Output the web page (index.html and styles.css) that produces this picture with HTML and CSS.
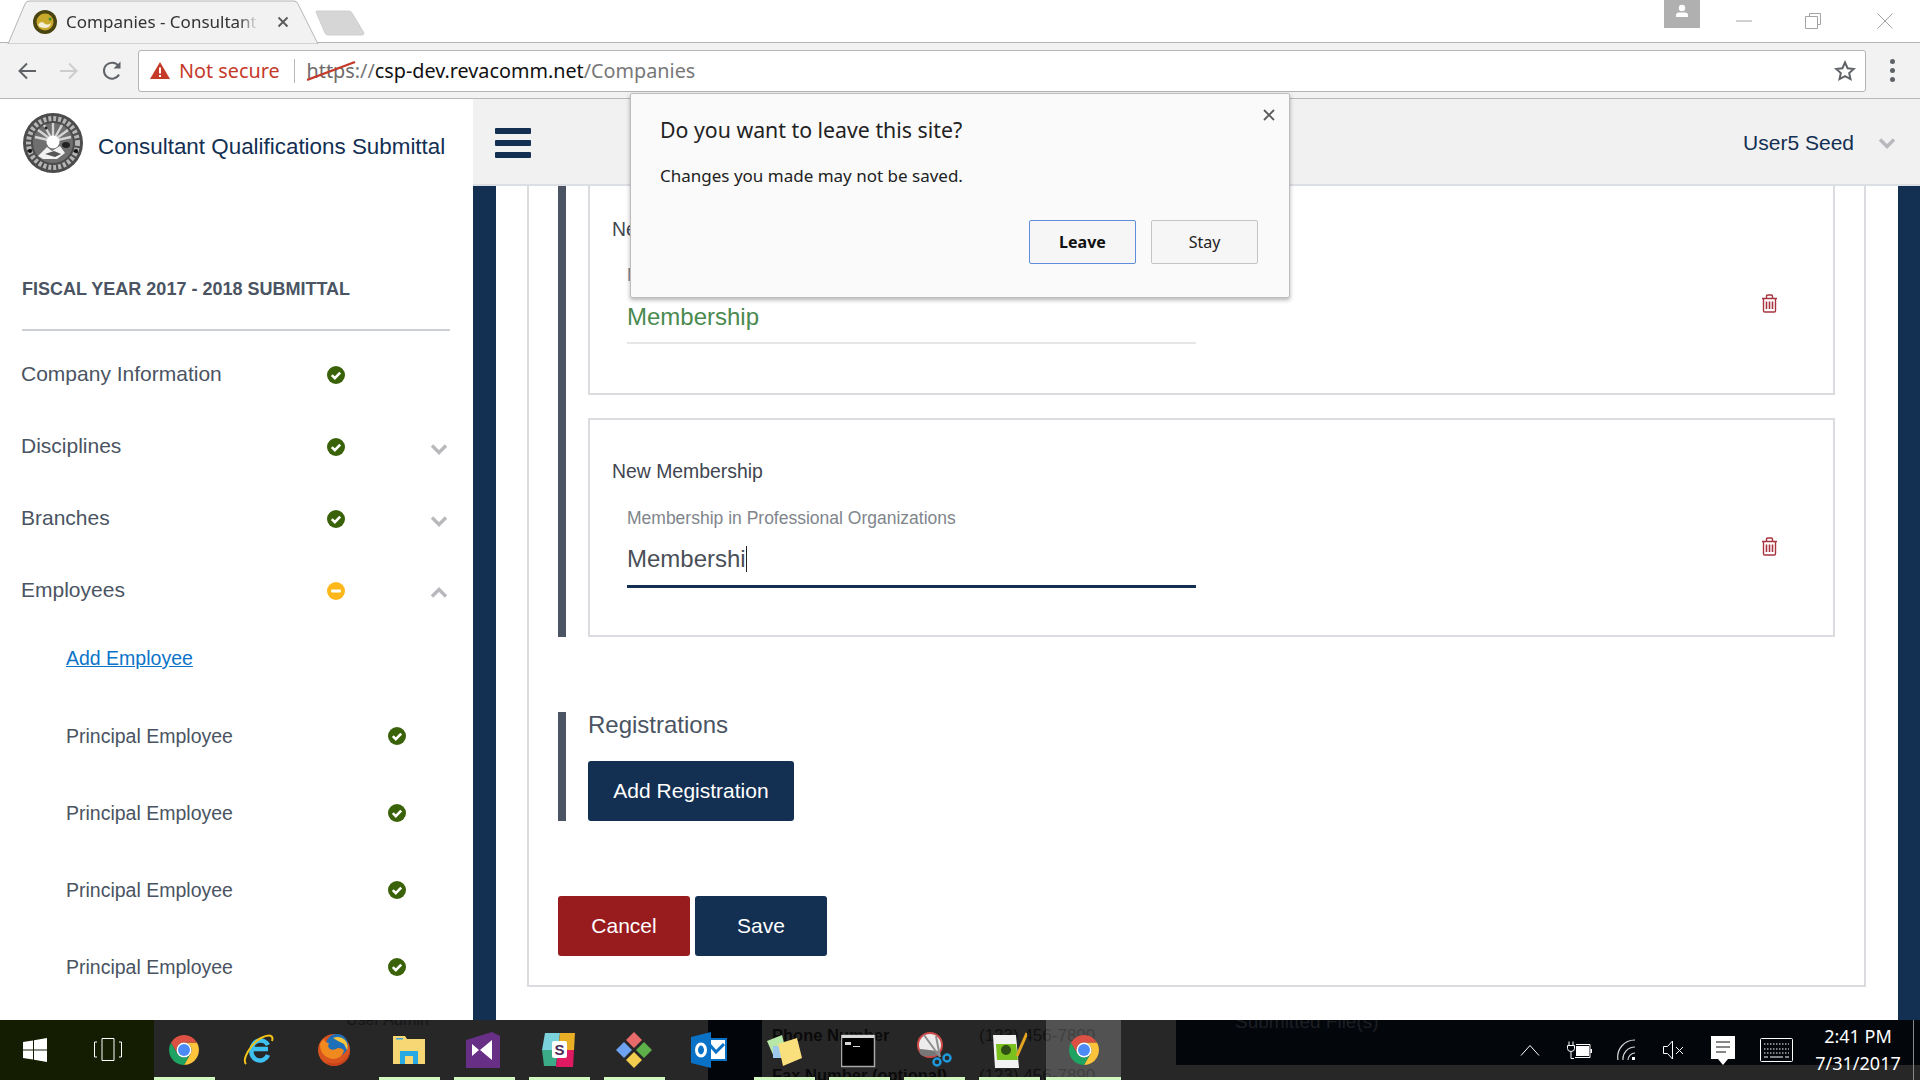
FILE: index.html
```html
<!DOCTYPE html>
<html lang="en">
<head>
  <meta charset="UTF-8" />
  <title>Companies - Consultant Qualifications Submittal</title>
  <link rel="stylesheet" href="styles.css">
</head>
<body>

  <svg class="sprites" width="0" height="0">
    <symbol id="ok" viewBox="0 0 18 18">
      <circle cx="9" cy="9" r="9" fill="#3a6209"/>
      <path d="M4.8 9.2l3 3 5.4-5.6" fill="none" stroke="#fff" stroke-width="2.6"/>
    </symbol>
    <symbol id="partial" viewBox="0 0 18 18">
      <circle cx="9" cy="9" r="9" fill="#fdb71b"/>
      <rect x="4" y="7.5" width="10" height="3" rx="1" fill="#fff"/>
    </symbol>
    <symbol id="down" viewBox="0 0 18 12">
      <path d="M2 2.5l7 7 7-7" fill="none" stroke="#b9b9bd" stroke-width="3.4"/>
    </symbol>
    <symbol id="up" viewBox="0 0 18 12">
      <path d="M2 9.5l7-7 7 7" fill="none" stroke="#b9b9bd" stroke-width="3.4"/>
    </symbol>
    <symbol id="trash" viewBox="0 0 17 19">
      <path d="M1 4.5h15M5.5 4V2.2Q5.500 1 6.700 1h3.600Q11.500 1 11.500 2.200V4M2.500 5v11.800Q2.500 18 3.700 18h9.600Q14.500 18 14.500 16.800V5" fill="none" stroke="#a83440" stroke-width="1.400"/>
      <path d="M5.500 7.500v7.500M8.500 7.500v7.500M11.500 7.500v7.500" stroke="#a83440" stroke-width="1.600"/>
    </symbol>
    <symbol id="chrome" viewBox="0 0 48 48">
      <path d="M41.300 14A20 20 0 0 1 24 44L32.660 29A10 10 0 0 0 24 14Z" fill="#fdc43b"/>
      <path d="M24 44A20 20 0 0 1 6.700 14L15.340 29A10 10 0 0 0 32.660 29Z" fill="#1ea362"/>
      <path d="M6.700 14A20 20 0 0 1 41.300 14H24A10 10 0 0 0 15.340 29Z" fill="#dd5144"/>
      <circle cx="24" cy="24" r="10" fill="#fff"/>
      <circle cx="24" cy="24" r="8" fill="#4c8bf5"/>
    </symbol>
  </svg>

  <header class="browser">
    <div class="tabstrip">
      <div class="tab">
        <svg class="tab-shape" width="320" height="44" viewBox="0 0 320 44"><path d="M8 44L25 4Q26 1 29 1H294Q297 1 298 4L318 44Z" fill="#f2f2f2" stroke="#b4b4b4"/></svg>
        <svg class="favicon" width="24" height="24" viewBox="0 0 24 24">
          <circle cx="12" cy="12" r="12" fill="#4a4410"/>
          <circle cx="12" cy="12" r="8.500" fill="#c9a92c"/>
          <path d="M5 15q3-5 6-2t7 0q-1 5-6 5t-7-3z" fill="#f4f0d8"/>
          <circle cx="17" cy="9" r="1.500" fill="#3d8c2a"/>
        </svg>
        <span class="tab-title">Companies - Consultant Qualifications Submittal</span>
        <svg class="tab-close" width="12" height="12" viewBox="0 0 12 12"><path d="M1.500 1.500l9 9M10.500 1.500l-9 9" stroke="#5a5a5a" stroke-width="1.800"/></svg>
      </div>
      <svg class="newtab" width="50" height="26" viewBox="0 0 50 26"><path d="M1 2Q1 1 2 1H34Q36 1 37 3L49 23Q49 25 47 25H13Q11 25 10 23Z" fill="#d6d6d6" stroke="#cfcfcf"/></svg>
      <div class="win-controls">
        <div class="profile">
          <svg width="18" height="18" viewBox="0 0 18 18"><circle cx="9" cy="6" r="3.200" fill="#fff"/><path d="M3 15v-2q0-2.500 3-2.500h6q3 0 3 2.500v2z" fill="#fff"/></svg>
        </div>
        <svg class="win-min" width="16" height="2" viewBox="0 0 16 2"><path d="M0 1h16" stroke="#a4a4a4"/></svg>
        <svg class="win-max" width="16" height="16" viewBox="0 0 16 16"><path d="M4.500 3V.5h11v11H13M.5 3.500h12v12H.5z" fill="none" stroke="#a4a4a4"/></svg>
        <svg class="win-close" width="16" height="16" viewBox="0 0 16 16"><path d="M.5.500l15 15M15.500.500l-15 15" stroke="#a4a4a4"/></svg>
      </div>
    </div>
    <div class="toolbar">
      <svg class="tool" width="20" height="20" viewBox="0 0 20 20"><path d="M19 10H3M10 2.500L2.500 10l7.500 7.500" fill="none" stroke="#5f6368" stroke-width="2"/></svg>
      <svg class="tool" width="20" height="20" viewBox="0 0 20 20"><path d="M1 10h16M10 2.500l7.500 7.500-7.500 7.500" fill="none" stroke="#cdcdcd" stroke-width="2"/></svg>
      <svg class="tool" width="22" height="22" viewBox="0 0 22 22"><path d="M18 14.500A8 8 0 1 1 17.500 6" fill="none" stroke="#5f6368" stroke-width="2"/><path d="M19.500 1.500v7h-7z" fill="#5f6368"/></svg>
      <div class="omnibox">
        <svg class="warn" width="20" height="17" viewBox="0 0 20 17"><path d="M10 0l10 17H0z" fill="#c53929"/><path d="M10 5.500v6M10 13v2" stroke="#fff" stroke-width="2"/></svg>
        <span class="not-secure">Not secure</span>
        <span class="omni-sep"></span>
        <span class="url">
          <span class="scheme">https<svg class="strike" width="50" height="22" viewBox="0 0 50 22"><path d="M0 20L48 2" stroke="#c53929" stroke-width="2.400"/></svg></span><span class="url-dim">://</span>csp-dev.revacomm.net<span class="url-dim">/Companies</span>
        </span>
        <svg class="star" width="22" height="22" viewBox="0 0 22 22"><path d="M11 2.500l2.600 5.700 6.200.7-4.600 4.200 1.300 6.100L11 16.200l-5.500 3 1.300-6.100-4.600-4.200 6.200-.7z" fill="none" stroke="#5f6368" stroke-width="2"/></svg>
      </div>
      <div class="kebab"><i></i><i></i><i></i></div>
    </div>
  </header>

  <div class="app">
    <aside class="sidebar">
      <div class="brand">
        <svg class="seal" width="60" height="60" viewBox="0 0 60 60">
          <circle cx="30" cy="30" r="30" fill="#4c4c4c"/>
          <circle cx="30" cy="30" r="24.500" fill="none" stroke="#b5b5b5" stroke-width="5" stroke-dasharray="3 2"/>
          <circle cx="30" cy="30" r="20" fill="#6f6f6f"/>
          <path d="M30 28L12 24M30 28L15 17M30 28L21 12M30 28V10M30 28L39 12M30 28L45 17M30 28L48 24" stroke="#d4d4d4" stroke-width="2.400"/>
          <circle cx="30" cy="29" r="6.500" fill="#fff"/>
          <path d="M15 43l9-9 5 4 8-5 5 7-8 6H20z" fill="#f2f2f2"/>
          <path d="M22 41l9-3 7 3-6 3z" fill="#555"/>
          <ellipse cx="43" cy="32" rx="4" ry="3" fill="#222"/>
          <circle cx="23" cy="15" r="1.600" fill="#222"/>
          <circle cx="7" cy="38" r="2" fill="#111"/>
          <circle cx="53" cy="38" r="2" fill="#111"/>
        </svg>
        <span class="brand-name">Consultant Qualifications Submittal</span>
      </div>
      <h2 class="fiscal">FISCAL YEAR 2017 - 2018 SUBMITTAL</h2>
      <nav class="nav">
        <div class="nav-row"><span>Company Information</span><svg class="status"><use href="#ok"/></svg></div>
        <div class="nav-row"><span>Disciplines</span><svg class="status"><use href="#ok"/></svg><svg class="chev"><use href="#down"/></svg></div>
        <div class="nav-row"><span>Branches</span><svg class="status"><use href="#ok"/></svg><svg class="chev"><use href="#down"/></svg></div>
        <div class="nav-row"><span>Employees</span><svg class="status"><use href="#partial"/></svg><svg class="chev"><use href="#up"/></svg></div>
        <a class="add-link" href="#">Add Employee</a>
        <div class="sub-row"><span>Principal Employee</span><svg class="status"><use href="#ok"/></svg></div>
        <div class="sub-row"><span>Principal Employee</span><svg class="status"><use href="#ok"/></svg></div>
        <div class="sub-row"><span>Principal Employee</span><svg class="status"><use href="#ok"/></svg></div>
        <div class="sub-row"><span>Principal Employee</span><svg class="status"><use href="#ok"/></svg></div>
      </nav>
    </aside>

    <main class="main">
      <div class="topbar">
        <div class="burger"><i></i><i></i><i></i></div>
        <div class="user">
          <span>User5 Seed</span>
          <svg class="chev"><use href="#down"/></svg>
        </div>
      </div>
      <div class="stage">
        <div class="pane">
          <div class="panel">
            <section class="group">
              <div class="card card-cut">
                <div class="card-title">New Membership</div>
                <div class="card-row">
                  <div class="field">
                    <label class="field-label">Membership in Professional Organizations</label>
                    <div class="field-value valid">Membership</div>
                  </div>
                  <svg class="trash"><use href="#trash"/></svg>
                </div>
              </div>
              <div class="card">
                <div class="card-title">New Membership</div>
                <div class="card-row">
                  <div class="field active">
                    <label class="field-label">Membership in Professional Organizations</label>
                    <div class="field-value">Membershi<span class="caret"></span></div>
                  </div>
                  <svg class="trash"><use href="#trash"/></svg>
                </div>
              </div>
            </section>

            <section class="group group-reg">
              <h3 class="group-title">Registrations</h3>
              <button class="btn btn-navy btn-add">Add Registration</button>
            </section>

            <div class="actions">
              <button class="btn btn-red">Cancel</button>
              <button class="btn btn-navy">Save</button>
            </div>
          </div>
        </div>
      </div>
    </main>
  </div>

  <footer class="taskbar">
    <div class="ghost ghost-admin">User Admin</div>
    <div class="ghost ghost-phone">Phone Number</div>
    <div class="ghost ghost-num">(123) 456-7890</div>
    <div class="ghost ghost-fax">Fax Number (optional)</div>
    <div class="ghost ghost-num2">(123) 456-7890</div>
    <div class="ghost ghost-files">Submitted File(s)</div>

    <div class="tb-start">
      <svg width="24" height="24" viewBox="0 0 24 24"><path d="M0 4l10-1.500V11.500H0zM11 2.300L24 0v11.500H11zM0 12.500h10V21.500L0 20zM11 12.500h13V24l-13-2.300z" fill="#fff"/></svg>
    </div>
    <div class="tb-view">
      <svg width="30" height="24" viewBox="0 0 30 24"><path d="M9 .500h12v22H9z" fill="none" stroke="#fff"/><path d="M4 4H1.500v15H4M26 4h2.500v15H26" fill="none" stroke="#fff"/></svg>
    </div>

    <div class="tb-app lit"><svg class="tb-ico"><use href="#chrome"/></svg></div>
    <div class="tb-app">
      <svg class="tb-ico" viewBox="0 0 36 36">
        <path d="M27 17H11.500M11 17a8.500 8.500 0 0 1 16-4M27 23a8.500 8.500 0 0 1-16-6" fill="none" stroke="#3fc1ef" stroke-width="4.500"/>
        <path d="M5 32C1 28 9 12 20 6c8-4 13-3 11 3" fill="none" stroke="#f2c318" stroke-width="2"/>
      </svg>
    </div>
    <div class="tb-app">
      <svg class="tb-ico" viewBox="0 0 36 36">
        <circle cx="18" cy="18" r="16" fill="#d9531e"/>
        <circle cx="21" cy="13" r="11" fill="#1d6fb8"/>
        <path d="M17 6q7-3 12 2 4 5 2 10l-3-6-6-3z" fill="#f7c53c"/>
        <path d="M4 12q0 13 13 15 8 0 11-8-1-3-6-3-5 3-8 1t-1-6q-4 0-5-4-3 2-4 5z" fill="#f08a1f"/>
        <path d="M10 30q10 4 18-2 5-4 6-10 0 14-16 16-5 0-8-4z" fill="#c9401a"/>
      </svg>
    </div>
    <div class="tb-app lit">
      <svg class="tb-ico" viewBox="0 0 36 36">
        <path d="M2 4h12l2 3h18v25H2z" fill="#f7d774"/>
        <rect x="5" y="6" width="7" height="1.500" fill="#3fa5d8"/>
        <path d="M9 32V19h18v13h-5v-8h-8v8z" fill="#27a9e3"/>
      </svg>
    </div>
    <div class="tb-app lit">
      <svg class="tb-ico" viewBox="0 0 36 36">
        <path d="M0 8L26 0l8 4v33l-8 0H0z" fill="#672f86"/>
        <path d="M6 12l7 6-7 6zM26 8v20l-12-10z" fill="#fff"/>
      </svg>
    </div>
    <div class="tb-app lit">
      <svg class="tb-ico" viewBox="0 0 36 36">
        <path d="M4 1h15l-2 17H1z" fill="#7bd2dc"/><path d="M19 1h15l-1 17H17z" fill="#e8ae25"/>
        <path d="M1 18h16l-2 16H3z" fill="#3bab87"/><path d="M17 18h16l-1 17H15z" fill="#df1a62"/>
        <rect x="11" y="9" width="15" height="17" rx="2" fill="#fff"/>
        <text x="18.500" y="23" class="slack-s">S</text>
      </svg>
    </div>
    <div class="tb-app lit">
      <svg class="tb-ico" viewBox="0 0 36 36">
        <path d="M18 0l8 8-8 8-8-8z" fill="#e86a6a"/><path d="M8 10l8 8-8 8-8-8z" fill="#6ea3f2"/>
        <path d="M28 10l8 8-8 8-8-8z" fill="#5db04a"/><path d="M18 20l8 8-8 8-8-8z" fill="#f3cd4f"/>
      </svg>
    </div>
    <div class="tb-app">
      <svg class="tb-ico" viewBox="0 0 36 36">
        <rect x="16" y="7" width="19" height="21" fill="#fff" stroke="#0a72c6" stroke-width="2"/>
        <path d="M18 12l7 8 8-8" fill="none" stroke="#0a72c6" stroke-width="3"/>
        <path d="M0 5L20 0v36L0 31z" fill="#0a72c6"/>
        <ellipse cx="10" cy="18" rx="4.500" ry="6" fill="none" stroke="#fff" stroke-width="3"/>
      </svg>
    </div>
    <div class="tb-app lit">
      <svg class="tb-ico" viewBox="0 0 36 36">
        <path d="M1 9l15-6 4 16-12 6z" fill="#b8e8a8"/><rect x="7" y="14" width="10" height="12" fill="#9fc9ec"/>
        <path d="M12 12l19-6 5 20-19 8z" fill="#f9e07c"/>
      </svg>
    </div>
    <div class="tb-app lit">
      <svg class="tb-ico" viewBox="0 0 36 36">
        <rect x=".500" y="3.500" width="33" height="31" fill="#000" stroke="#a9a9a9" stroke-width="1.500"/>
        <rect x="1" y="3" width="32" height="3" fill="#d8d8d8"/>
        <path d="M4 10h6v3H4zM12 14h7v1h-7z" fill="#d9d9d9"/>
      </svg>
    </div>
    <div class="tb-app lit">
      <svg class="tb-ico" viewBox="0 0 36 36">
        <ellipse cx="14" cy="13" rx="12" ry="12" fill="#ececec" stroke="#d04a4a" stroke-width="2"/>
        <path d="M4 17q-2 6 4 7t14-1v-4z" fill="#777"/>
        <path d="M8 3l16 22M20 4l4 21" stroke="#8e8e8e" stroke-width="2"/>
        <circle cx="21" cy="30" r="3.500" fill="none" stroke="#1f97d8" stroke-width="2.500"/>
        <circle cx="31" cy="26" r="3.500" fill="none" stroke="#1f97d8" stroke-width="2.500"/>
      </svg>
    </div>
    <div class="tb-app lit">
      <svg class="tb-ico" viewBox="0 0 36 36">
        <path d="M2 3h23l3 33H4z" fill="#f2f2f2"/>
        <path d="M5 12h20l2 16H6z" fill="#7ac11f"/>
        <circle cx="15" cy="18" r="5" fill="#2f4f14"/>
        <path d="M36 1L26 24" stroke="#e3a521" stroke-width="3"/>
      </svg>
    </div>
    <div class="tb-app lit active"><svg class="tb-ico"><use href="#chrome"/></svg></div>

    <div class="tray">
      <div class="tray-cell tray-caret"><svg width="20" height="12" viewBox="0 0 20 12"><path d="M1 11.500l9-10 9 10" fill="none" stroke="#fff"/></svg></div>
      <div class="tray-cell tray-power">
        <svg width="26" height="18" viewBox="0 0 26 18">
          <path d="M3 .500v4M7 .500v4M1.500 4.500h7v3q0 3-3.500 3t-3.500-3zM5 10.500v7h3" fill="none" stroke="#fff"/>
          <path d="M10 3.500h14v13H9" fill="none" stroke="#fff"/><rect x="10" y="5" width="13" height="10" fill="#fff"/><rect x="24.500" y="8" width="1.500" height="4" fill="#fff"/>
        </svg>
      </div>
      <div class="tray-cell tray-wifi">
        <svg width="20" height="22" viewBox="0 0 20 22"><path d="M1 21A17 17 0 0 1 18 1M6 21A12 12 0 0 1 18 8M11 21a7 7 0 0 1 7-7" fill="none" stroke="#d8d8d8" stroke-width="1.200"/><rect x="15" y="18" width="3" height="3" fill="#fff"/></svg>
      </div>
      <div class="tray-cell tray-sound">
        <svg width="22" height="20" viewBox="0 0 22 20"><path d="M.5 6.500h4l5-5.500v18l-5-5.500h-4zM13 7l7 7M20 7l-7 7" fill="none" stroke="#fff"/></svg>
      </div>
      <div class="tray-cell tray-note">
        <svg width="24" height="29" viewBox="0 0 24 29"><path d="M0 0h24v23h-7l-5 6-5-6H0z" fill="#fff"/><path d="M5 6h14M5 11h14M5 16h10" stroke="#111" stroke-width="1.200"/></svg>
      </div>
      <div class="tray-cell tray-keys">
        <svg width="33" height="24" viewBox="0 0 33 24"><rect x=".500" y=".500" width="32" height="23" rx="1" fill="none" stroke="#fff"/><path d="M4 6h25M4 11h25M4 15h25" stroke="#fff" stroke-dasharray="1.500 1.500"/><path d="M4 19h4M10 19h13M25 19h4" stroke="#fff"/></svg>
      </div>
      <div class="clock">
        <div class="clock-time">2:41 PM</div>
        <div class="clock-date">7/31/2017</div>
      </div>
    </div>
  </footer>

  <div class="dialog">
    <svg class="dialog-close" width="12" height="12" viewBox="0 0 12 12"><path d="M1 1l10 10M11 1L1 11" stroke="#5a5a5a" stroke-width="1.800"/></svg>
    <div class="dialog-title">Do you want to leave this site?</div>
    <div class="dialog-text">Changes you made may not be saved.</div>
    <div class="dialog-actions">
      <button class="dlg-btn dlg-primary">Leave</button>
      <button class="dlg-btn">Stay</button>
    </div>
  </div>

</body>
</html>
```

FILE: styles.css
```css
* {
  box-sizing: border-box;
}

body {
  margin: 0;
  width: 1920px;
  height: 1080px;
  overflow: hidden;
  position: relative;
  display: flex;
  flex-direction: column;
  background: #fff;
  font-family: "Liberation Sans", Arial, sans-serif;
  color: #4a5462;
}

.sprites {
  position: absolute;
}

/* browser chrome */
.browser {
  flex: none;
  height: 99px;
  font-family: "Noto Sans", "Open Sans", sans-serif;
}

.tabstrip {
  height: 43px;
  display: flex;
  background: #fff;
  border-bottom: 1px solid #b4b4b4;
}

.tab {
  position: relative;
  width: 320px;
  height: 43px;
  display: flex;
  align-items: center;
  padding-left: 33px;
}

.tab-shape {
  position: absolute;
  left: 0;
  top: 0;
}

.favicon,
.tab-title,
.tab-close {
  position: relative;
}

.tab-title {
  width: 192px;
  margin-left: 9px;
  font-size: 17px;
  white-space: nowrap;
  overflow: hidden;
  color: #333;
  -webkit-mask-image: linear-gradient(to right, #000 90%, transparent 100%);
}

.tab-close {
  margin-left: 19px;
}

.newtab {
  margin-top: 10px;
  margin-left: -5px;
}

.win-controls {
  margin-left: auto;
  display: flex;
  align-items: flex-start;
}

.profile {
  width: 36px;
  height: 28px;
  background: #b0b0b0;
  display: flex;
  justify-content: center;
  padding-top: 2px;
}

.win-min {
  margin: 20px 0 0 36px;
}

.win-max {
  margin: 13px 0 0 53px;
}

.win-close {
  margin: 13px 27px 0 56px;
}

.toolbar {
  height: 56px;
  background: #f2f2f2;
  border-bottom: 1px solid #b9b9b9;
  display: flex;
  align-items: center;
  padding-left: 17px;
}

.tool {
  flex: none;
  margin-right: 22px;
}

.omnibox {
  width: 1728px;
  height: 42px;
  margin-left: -7px;
  background: #fff;
  border: 1px solid #b4b4b4;
  border-radius: 3px;
  display: flex;
  align-items: center;
  padding-left: 11px;
  font-size: 19.800px;
  white-space: nowrap;
}

.not-secure {
  margin-left: 9px;
  color: #c53929;
}

.omni-sep {
  width: 1px;
  height: 24px;
  margin: 0 12px 0 14px;
  background: #b9b9b9;
}

.url {
  color: #111;
}

.scheme {
  position: relative;
  color: #6f6a6a;
}

.strike {
  position: absolute;
  left: 0;
  top: 3px;
}

.url-dim {
  color: #777;
}

.star {
  margin-left: auto;
  margin-right: 9px;
}

.kebab {
  margin-left: 24px;
  display: flex;
  flex-direction: column;
  gap: 4px;
}

.kebab i {
  display: block;
  width: 5px;
  height: 5px;
  border-radius: 50%;
  background: #5f6368;
}

/* app */
.app {
  flex: none;
  height: 921px;
  display: flex;
}

.sidebar {
  flex: none;
  width: 473px;
  background: #fff;
}

.brand {
  height: 87px;
  display: flex;
  align-items: center;
  padding-left: 23px;
}

.brand-name {
  margin-left: 15px;
  padding-top: 8px;
  font-size: 22.400px;
  color: #132f52;
}

.seal {
  flex: none;
}

.fiscal {
  margin: 0 23px 0 22px;
  height: 145px;
  padding-top: 93px;
  font-size: 18px;
  line-height: 20px;
  font-weight: bold;
  color: #4a5462;
  border-bottom: 2px solid #ccd0d6;
  width: 428px;
}

.nav {
  padding-top: 8px;
  font-size: 21px;
}

.nav-row {
  height: 72px;
  display: grid;
  grid-template-columns: 306px 18px 85px 18px;
  align-items: center;
  padding-left: 21px;
}

.nav-row span {
  margin-top: -2px;
}

.nav-row .chev {
  grid-column: 4;
  margin-top: 4px;
}

.sub-row {
  height: 77px;
  display: grid;
  grid-template-columns: 322px 18px;
  align-items: center;
  padding-left: 66px;
  font-size: 19.500px;
}

.sub-row .status {
  margin-top: -1px;
}

.status {
  width: 18px;
  height: 18px;
}

.chev {
  width: 18px;
  height: 12px;
}

.add-link {
  display: flex;
  align-items: center;
  height: 62px;
  margin-bottom: 9px;
  padding-left: 66px;
  font-size: 19.500px;
  color: #0b74c8;
  text-decoration: underline;
}

.main {
  flex: 1;
  display: flex;
  flex-direction: column;
  min-width: 0;
}

.topbar {
  flex: none;
  height: 87px;
  background: #f1f1f1;
  border-bottom: 2px solid #dcdfe3;
  display: flex;
  align-items: center;
  padding: 2px 24px 0 22px;
  color: #132f52;
}

.burger {
  display: flex;
  flex-direction: column;
  gap: 6px;
}

.burger i {
  display: block;
  width: 36px;
  height: 6px;
  border-radius: 1px;
  background: #132f52;
}

.user {
  margin-left: auto;
  display: flex;
  align-items: center;
  gap: 24px;
  font-size: 21px;
}

.stage {
  flex: 1;
  min-height: 0;
  display: flex;
  background: #fff;
  border-left: 23px solid #132f52;
  border-right: 22px solid #132f52;
  padding-left: 31px;
  padding-right: 32px;
}

.pane {
  flex: 1;
  min-width: 0;
}

.panel {
  height: 801px;
  border: 2px solid #dcdce0;
  border-top: none;
  padding-left: 29px;
  padding-right: 29px;
}

.group {
  border-left: 8px solid #4a5462;
  padding-left: 22px;
  display: flex;
  flex-direction: column;
}

.card {
  height: 219px;
  border: 2px solid #dcdce0;
  padding: 40px 0 0 22px;
  font-size: 19.400px;
}

.card-cut {
  height: 209px;
  margin-bottom: 23px;
  border-top: none;
  padding-top: 32px;
}

.card-title {
  line-height: 22px;
  color: #3f4650;
}

.card-row {
  display: flex;
  align-items: center;
}

.field {
  width: 569px;
  margin-left: 15px;
  margin-top: 23px;
  border-bottom: 2px solid #e6e6e6;
  height: 82px;
}

.card-cut .field {
  margin-top: 22px;
}

.field.active {
  border-bottom: 3px solid #132f52;
  height: 83px;
}

.field-label {
  display: block;
  padding-top: 3px;
  font-size: 17.500px;
  line-height: 20px;
  color: #80858c;
}

.field-value {
  margin-top: 16px;
  font-size: 24px;
  line-height: 30px;
  color: #4a4f57;
}

.field-value.valid {
  margin-top: 17px;
  color: #4a8a4f;
}

.caret {
  display: inline-block;
  width: 1px;
  height: 26px;
  margin-left: 0;
  vertical-align: -5px;
  background: #222;
}

.trash {
  width: 17px;
  height: 19px;
  margin-left: 565px;
  margin-top: 23px;
}

.group-reg {
  margin-top: 75px;
  height: 109px;
  align-items: flex-start;
}

.group-title {
  margin: 0;
  height: 49px;
  font-size: 24px;
  line-height: 26px;
  font-weight: normal;
  color: #4a5462;
}

.btn {
  height: 60px;
  border: none;
  border-radius: 3px;
  color: #fff;
  font-family: "Liberation Sans", Arial, sans-serif;
  font-size: 21px;
  width: 132px;
}

.btn-navy {
  background: #132f52;
}

.btn-red {
  background: #981b1e;
}

.btn-add {
  width: 206px;
}

.actions {
  margin-top: 75px;
  display: flex;
  gap: 5px;
}

/* taskbar, the page under it shows through */
.taskbar {
  flex: 1;
  position: relative;
  display: flex;
  overflow: hidden;
  color: #fff;
  background:
    linear-gradient(to right, #141d02 154px, transparent 154px),
    linear-gradient(to right, transparent 708px, #02050a 708px, #02050a 762px, transparent 762px),
    linear-gradient(to bottom, #03060a 45px, transparent 45px) 1176px 0 no-repeat,
    #272727;
}

.ghost {
  position: absolute;
  color: #0f0f0f;
  font-size: 19px;
  white-space: nowrap;
}

.ghost-admin {
  left: 346px;
  top: -9px;
  font-size: 16px;
  color: #16161a;
}

.ghost-phone {
  left: 772px;
  top: 6px;
  font-size: 16.500px;
  font-weight: bold;
  color: #0a0a0a;
}

.ghost-num {
  left: 979px;
  top: 6px;
  font-size: 17px;
  color: #111;
}

.ghost-fax {
  left: 772px;
  top: 46px;
  font-size: 16.500px;
  font-weight: bold;
  color: #0a0a0a;
}

.ghost-num2 {
  left: 979px;
  top: 46px;
  font-size: 17px;
  color: #111;
}

.ghost-files {
  left: 1235px;
  top: -9px;
  color: #1d1f24;
}

.tb-start {
  flex: none;
  width: 70px;
  display: flex;
  align-items: center;
  justify-content: center;
  position: relative;
}

.tb-view {
  flex: none;
  width: 76px;
  display: flex;
  align-items: center;
  justify-content: center;
  position: relative;
}

.tb-app {
  flex: none;
  width: 75px;
  display: flex;
  align-items: center;
  justify-content: center;
  position: relative;
}

.tb-app.lit::after {
  content: "";
  position: absolute;
  left: 8px;
  right: 6px;
  bottom: 0;
  height: 3px;
  background: #d0f8c0;
}

.tb-app.active {
  background: rgba(255, 255, 255, 0.2);
}

.tb-app.active::after {
  left: 0;
  right: 0;
}

.tb-ico {
  width: 36px;
  height: 36px;
}

.slack-s {
  font-family: "Liberation Sans", Arial, sans-serif;
  font-size: 15px;
  font-weight: bold;
  text-anchor: middle;
  fill: #4b2a57;
}

.tray {
  position: absolute;
  right: 6px;
  top: 0;
  bottom: 0;
  display: flex;
  align-items: center;
  border-right: 1px solid #888;
}

.tray-cell {
  display: flex;
  justify-content: center;
  align-items: center;
}

.tray-caret {
  width: 48px;
}

.tray-power {
  width: 50px;
}

.tray-wifi {
  width: 46px;
}

.tray-sound {
  width: 47px;
}

.tray-note {
  width: 52px;
}

.tray-keys {
  width: 54px;
}

.clock {
  width: 110px;
  text-align: center;
  font-family: "Noto Sans", "Open Sans", sans-serif;
  font-size: 18px;
  line-height: 27px;
}

/* beforeunload prompt */
.dialog {
  position: absolute;
  left: 630px;
  top: 93px;
  width: 660px;
  height: 205px;
  padding: 22px 31px 0 29px;
  background: #fafafa;
  border: 1px solid #bdbdbd;
  border-radius: 2px;
  box-shadow: 0 2px 4px rgba(0, 0, 0, 0.3);
  font-family: "Noto Sans", "Open Sans", sans-serif;
  color: #222;
}

.dialog-close {
  position: absolute;
  right: 14px;
  top: 15px;
}

.dialog-title {
  font-size: 21.300px;
  line-height: 28px;
}

.dialog-text {
  margin-top: 20px;
  font-size: 17px;
  line-height: 24px;
}

.dialog-actions {
  margin-top: 32px;
  display: flex;
  justify-content: flex-end;
  gap: 15px;
}

.dlg-btn {
  width: 107px;
  height: 44px;
  background: #f6f6f6;
  border: 1px solid #c4c4c4;
  border-radius: 2px;
  font-family: "Noto Sans", "Open Sans", sans-serif;
  font-size: 16px;
  color: #222;
}

.dlg-primary {
  border-color: #5f8fdc;
  font-weight: bold;
  color: #111;
}
```
